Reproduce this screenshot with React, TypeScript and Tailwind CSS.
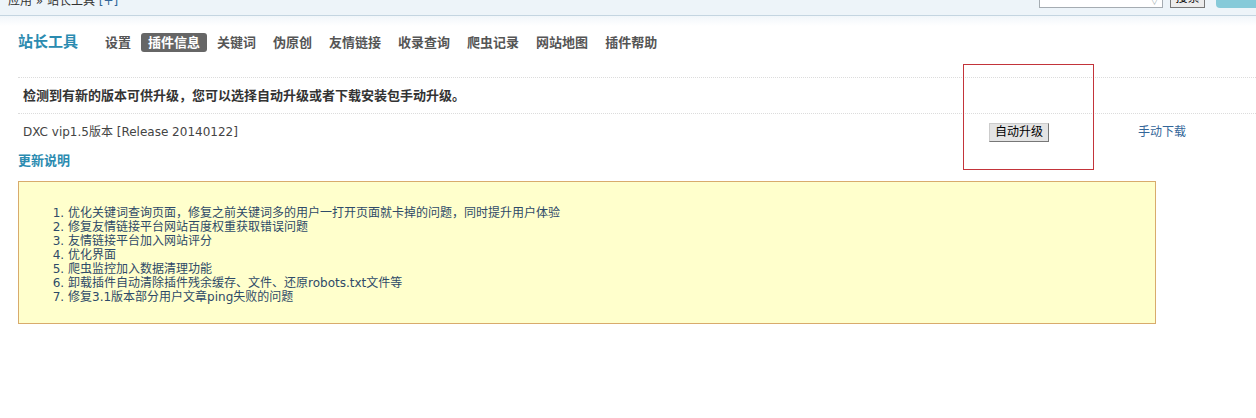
const FONT = '"DejaVu Sans", "Noto Sans CJK SC", sans-serif';

const NAV = ["设置", "插件信息", "关键词", "伪原创", "友情链接", "收录查询", "爬虫记录", "网站地图", "插件帮助"];

const NOTES = [
  "优化关键词查询页面，修复之前关键词多的用户一打开页面就卡掉的问题，同时提升用户体验",
  "修复友情链接平台网站百度权重获取错误问题",
  "友情链接平台加入网站评分",
  "优化界面",
  "爬虫监控加入数据清理功能",
  "卸载插件自动清除插件残余缓存、文件、还原robots.txt文件等",
  "修复3.1版本部分用户文章ping失败的问题",
];

export default function App() {
  return (
    <div className="relative min-h-[418px] bg-white text-[12px] text-[#333]" style={{ fontFamily: FONT }}>
      {/* top bar, scrolled so only its lower edge shows */}
      <div className="h-[16px] overflow-hidden border-b border-[#c4d5e1] bg-[#edf4f9]">
        <div className="flex h-[8px] items-end">
          <div className="pl-[8px] leading-[14px] text-[#333]">
            应用 » 站长工具 <span className="text-[#369]">[+]</span>
          </div>
          <div className="ml-auto flex items-end">
            <div className="relative h-[20px] w-[124px] border border-[#a5acb2] bg-white">
              <span className="absolute bottom-[1px] right-[4px] text-[9px] leading-none text-[#9aa]">▽</span>
            </div>
            <button className="ml-[7px] h-[20px] w-[35px] border border-[#777] bg-[#ececec] text-[12px] leading-[18px] text-black">
              搜索
            </button>
            <div className="ml-[11px] h-[20px] w-[48px] -mr-[8px] rounded-[4px] bg-[#86cad9] pl-[4px] text-[11px] font-bold leading-[18px] text-white">
              MAP
            </div>
          </div>
        </div>
      </div>
      <div className="h-[10px] bg-gradient-to-b from-[#f1f6fa] to-white" />

      {/* nav */}
      <div className="mt-[7px] flex h-[19px] items-center pl-[18px]">
        <div className="w-[80px] text-[15px] font-bold leading-[19px] text-[#2b8bb0]">站长工具</div>
        <div className="flex gap-[3px]">
          {NAV.map((n) => (
            <span
              key={n}
              className={`rounded-[3px] px-[7px] text-[13px] font-bold leading-[19px] ${
                n === "插件信息" ? "bg-[#666] text-white" : "text-[#555]"
              }`}
            >
              {n}
            </span>
          ))}
        </div>
      </div>

      {/* body */}
      <div className="ml-[18px] mt-[25px]">
        <div className="h-[37px] border-y border-dotted border-[#dcdcdc] pl-[5px] text-[13px] font-bold leading-[35px] text-[#333]">
          检测到有新的版本可供升级，您可以选择自动升级或者下载安装包手动升级。
        </div>
        <div className="grid h-[36px] grid-cols-[971px_149px_1fr] items-center">
          <div className="pl-[5px] text-[#444]">DXC vip1.5版本 [Release 20140122]</div>
          <div>
            <button className="h-[19px] w-[60px] border border-[#777] border-t-[#ccc] border-l-[#ccc] bg-[#e4e4e4] text-[12px] font-normal leading-[17px] text-black">
              自动升级
            </button>
          </div>
          <a className="text-[#336699]">手动下载</a>
        </div>
        <div className="h-[22px] text-[13px] font-bold leading-[22px] text-[#2b8bb0]">更新说明</div>

        <div className="mt-[9px] h-[143px] w-[1138px] border border-[#d8ab6c] bg-[#ffffcc] pt-[24px]">
          <ol className="list-decimal pl-[49px] leading-[14px] text-[#2e4a68]">
            {NOTES.map((n) => (
              <li key={n}>{n}</li>
            ))}
          </ol>
        </div>
      </div>

      {/* red highlight box drawn over the page */}
      <div className="pointer-events-none absolute left-[963px] top-[64px] h-[106px] w-[131px] border border-[#c3343a]" />
    </div>
  );
}
